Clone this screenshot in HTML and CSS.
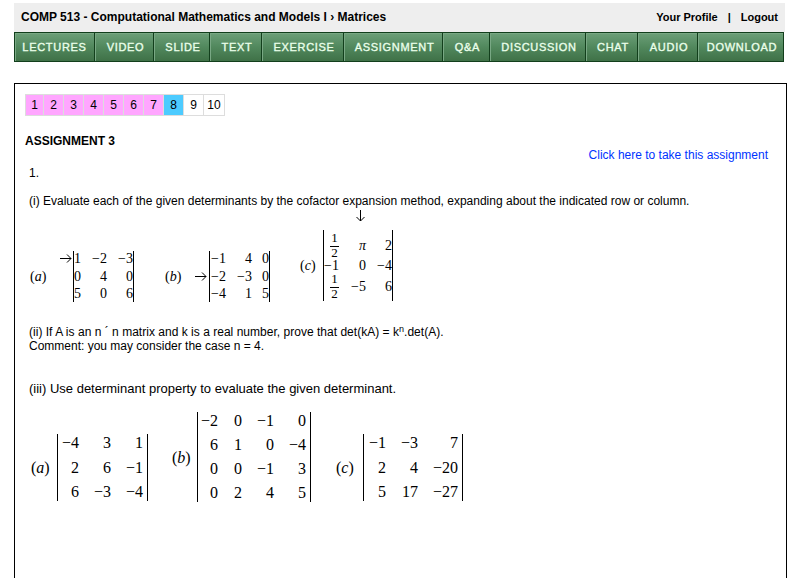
FILE: index.html
```html
<!DOCTYPE html>
<html lang="en">
<head>
<meta charset="utf-8">
<title>COMP 513 - Matrices</title>
<link rel="stylesheet" href="styles.css">
</head>
<body>
<header class="top">
  <div class="course">COMP 513 - Computational Mathematics and Models I › Matrices</div>
  <div class="account"><span>Your Profile</span><span class="sep">|</span><span>Logout</span></div>
</header>
<nav class="tabs">
  <a>LECTURES</a><a>VIDEO</a><a>SLIDE</a><a>TEXT</a><a>EXERCISE</a><a>ASSIGNMENT</a><a>Q&amp;A</a><a>DISCUSSION</a><a>CHAT</a><a>AUDIO</a><a>DOWNLOAD</a>
</nav>
<main class="sheet">
  <div class="pager">
    <a class="done">1</a><a class="done">2</a><a class="done">3</a><a class="done">4</a><a class="done">5</a><a class="done">6</a><a class="done">7</a><a class="current">8</a><a>9</a><a>10</a>
  </div>
  <h1>ASSIGNMENT 3</h1>
  <a class="take">Click here to take this assignment</a>
  <p class="number">1.</p>
  <p class="q q1"><span>(i) Evaluate each of the given determinants by the cofactor expansion method, expanding about the indicated row or column.</span></p>

  <div class="math first">
    <div class="item i-a">
      <span class="label">(<i>a</i>)</span>
      <svg class="arrow row1" width="12" height="9" viewBox="0 0 12 9"><path d="M0 4.5H11M7 .5L11 4.5L7 8.5"/></svg>
      <div class="matrix">
        <span>1</span><span>−2</span><span>−3</span>
        <span>0</span><span>4</span><span>0</span>
        <span>5</span><span>0</span><span>6</span>
      </div>
    </div>
    <div class="item i-b">
      <span class="label">(<i>b</i>)</span>
      <svg class="arrow" width="12" height="9" viewBox="0 0 12 9"><path d="M0 4.5H11M7 .5L11 4.5L7 8.5"/></svg>
      <div class="matrix">
        <span>−1</span><span>4</span><span>0</span>
        <span>−2</span><span>−3</span><span>0</span>
        <span>−4</span><span>1</span><span>5</span>
      </div>
    </div>
    <div class="item i-c">
      <span class="label">(<i>c</i>)</span>
      <div class="stack">
        <svg class="arrow" width="9" height="12" viewBox="0 0 9 12"><path d="M4.5 0V11M.5 7L4.5 11L8.5 7"/></svg>
        <div class="matrix">
          <span class="frac"><b>1</b><b>2</b></span><span class="pi"><i>π</i></span><span>2</span>
          <span>−1</span><span>0</span><span>−4</span>
          <span class="frac"><b>1</b><b>2</b></span><span>−5</span><span>6</span>
        </div>
      </div>
    </div>
  </div>

  <p class="q q2"><span>(ii) If A is an n ´ n matrix and k is a real number, prove that det(kA) = k<sup>n</sup>.det(A).</span><br><span class="comment">Comment: you may consider the case n = 4.</span></p>
  <p class="q q3"><span>(iii) Use determinant property to evaluate the given determinant.</span></p>

  <div class="math second">
    <div class="item j-a">
      <span class="label">(<i>a</i>)</span>
      <div class="matrix">
        <span>−4</span><span>3</span><span>1</span>
        <span>2</span><span>6</span><span>−1</span>
        <span>6</span><span>−3</span><span>−4</span>
      </div>
    </div>
    <div class="item j-b">
      <span class="label">(<i>b</i>)</span>
      <div class="matrix">
        <span>−2</span><span>0</span><span>−1</span><span>0</span>
        <span>6</span><span>1</span><span>0</span><span>−4</span>
        <span>0</span><span>0</span><span>−1</span><span>3</span>
        <span>0</span><span>2</span><span>4</span><span>5</span>
      </div>
    </div>
    <div class="item j-c">
      <span class="label">(<i>c</i>)</span>
      <div class="matrix">
        <span>−1</span><span>−3</span><span>7</span>
        <span>2</span><span>4</span><span>−20</span>
        <span>5</span><span>17</span><span>−27</span>
      </div>
    </div>
  </div>
</main>
</body>
</html>
```
FILE: styles.css
```css
* { box-sizing: border-box; }
html, body { margin: 0; height: 578px; overflow: hidden; }
body {
  padding: 3px 0 0 14px;
  background: #fff;
  color: #000;
  font: 12px/14px "Liberation Sans", Arial, sans-serif;
}
.top {
  display: flex;
  justify-content: space-between;
  width: 771px;
  height: 29px;
  padding: 0 7px;
  background: #eee;
  font-weight: bold;
  line-height: 28px;
  white-space: nowrap;
}
.account { display: flex; font-size: 11px; line-height: 29px; }
.sep { width: 23px; text-align: center; }
.tabs {
  display: grid;
  grid-template-columns: 80px 59px 56px 52px 82px 99px 47px 96px 52px 60px 87px;
  width: 770px;
  height: 30px;
  border: 1px solid #123f1c;
  border-left-width: 0;
  border-right-width: 0;
}
.tabs a {
  padding-left: 3px;
  border-left: 1px solid #123f1c;
  box-shadow: inset 1px 1px 0 #79a884;
  background: linear-gradient(#6c9f78, #52895e 48%, #3f7147);
  color: #eaffea;
  font-size: 11px;
  -webkit-text-stroke: 0.35px #eaffea;
  line-height: 28px;
  letter-spacing: 0.7px;
  text-align: center;
  white-space: nowrap;
}
.tabs a:first-child { padding-left: 0; }
.tabs a:last-child { border-right: 1px solid #123f1c; }
.sheet {
  width: 773px;
  height: 520px;
  margin-top: 21px;
  padding: 10px 0 0 10px;
  border: 1px solid #000;
}
.pager {
  display: grid;
  grid-template-columns: 18px repeat(8, 20px) 20px;
  width: 200px;
  height: 22px;
  border: 1px solid #ddd;
}
.pager a { line-height: 20px; text-align: center; border-right: 1px solid #ddd; }
.pager a:last-child { border-right: 0; }
.pager .done { background: #ffa6ff; }
.pager .current { background: #4dcbff; }
h1 { margin: 18px 0 0; font-size: 12px; line-height: 14px; }
.take { display: block; width: 743px; color: #0033ff; text-align: right; white-space: nowrap; }
p { margin: 0; }
.number { margin: 4px 0 0 4px; }
.q { margin-left: 4px; white-space: nowrap; }
.q1 { margin-top: 14px; }
sup { font-size: 9px; line-height: 0; vertical-align: 4px; }

.math { display: flex; font-family: "Liberation Serif", serif; }
.item { display: flex; align-items: center; }
.label { line-height: 16px; }
.matrix {
  display: grid;
  border: solid #000;
  border-width: 0 1px;
  text-align: right;
  white-space: nowrap;
}
.arrow { flex: none; fill: none; stroke: #000; stroke-width: 1; }

.first { height: 94px; padding-left: 5px; font-size: 14px; }
.first .item { height: 51px; margin-top: 43px; }
.first .matrix { height: 51px; grid-auto-rows: 17.5px; line-height: 15px; }
.i-a .label { width: 30px; }
.i-a .arrow.row1 { margin: -36px 1px 0 0; }
.i-a .matrix { grid-template-columns: 7px 26px 26px; width: 61px; }
.i-b { margin-left: 31px; }
.i-b .label { width: 30px; }
.i-b .arrow { margin-right: 2px; }
.i-b .matrix { grid-template-columns: 16px 26px 17px; width: 61px; }
.first .i-c { margin: 2px 0 0 30px; height: 92px; align-items: flex-start; }
.i-c .label { width: 23px; margin-top: 48px; }
.stack { display: flex; flex-direction: column; }
.stack .arrow { margin: 0 0 8px 33px; }
.first .i-c .matrix {
  width: 70px;
  height: 71px;
  grid-template-columns: 15px 27px 26px;
  grid-template-rows: 31px 9px 34px;
  align-items: center;
  line-height: 10px;
}
.i-c .frac { justify-self: end; width: 9px; text-align: center; font-size: 13px; }
.frac b { display: block; font-weight: normal; height: 14px; line-height: 12px; }
.frac b + b { height: 14px; line-height: 11px; border-top: 1px solid #000; }

.q2 { margin-top: 23px; }
.q2 > span:first-child { letter-spacing: 0.02px; }
.q3 { margin-top: 29px; font-size: 13px; }

.second { margin-top: 16px; height: 90px; padding-left: 6px; font-size: 16px; align-items: flex-start; }
.second .item { height: 67px; margin-top: 22px; }
.second .matrix { height: 67px; grid-auto-rows: 24.5px; line-height: 18px; }
.second .label { width: 26px; padding-top: 1px; }
.j-a .matrix { grid-template-columns: 21px 32px 32px; width: 91px; }
.second .j-b { height: 90px; margin: 0 0 0 24px; }
.second .j-b .label { width: 25px; }
.j-b .matrix { grid-template-columns: 20px 24px 32px 32px; grid-auto-rows: 24px; height: 90px; width: 114px; }
.j-c { margin-left: 25px; }
.second .j-c .label { width: 27px; }
.j-c .matrix { grid-template-columns: 22px 32px 40px; width: 100px; }
```
